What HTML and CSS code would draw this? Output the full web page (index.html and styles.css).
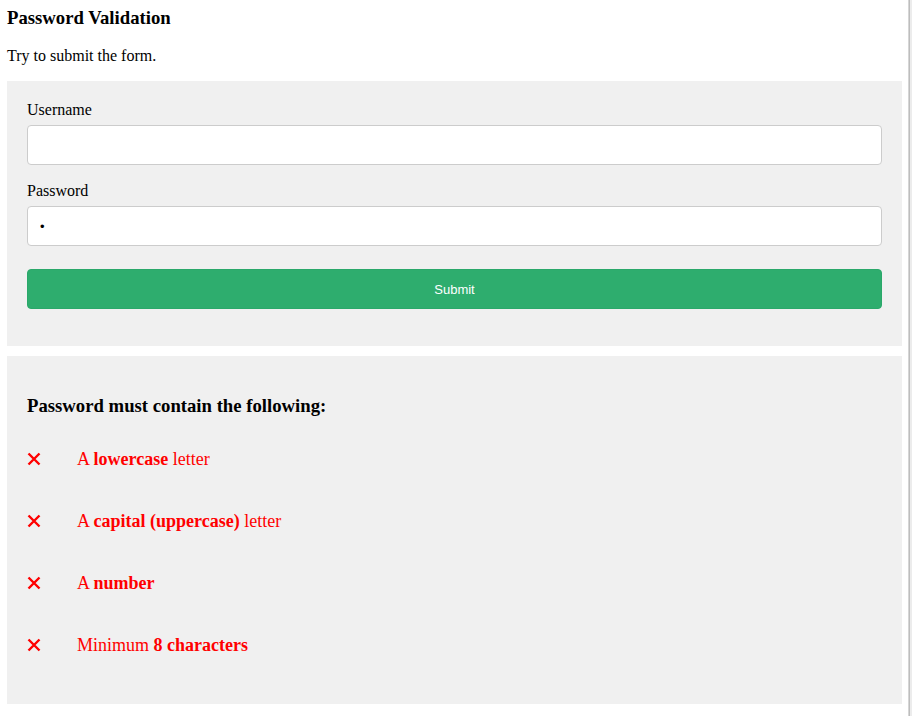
FILE: index.html
```html
<!DOCTYPE html>
<html>
<head>
<meta charset="utf-8">
<link rel="stylesheet" href="styles.css">
</head>
<body>
<h3 class="title">Password Validation</h3>
<p class="intro">Try to submit the form.</p>
<div class="container">
  <form class="form">
    <label class="label" for="usrname">Username</label>
    <input class="field" type="text" id="usrname" name="usrname">
    <label class="label" for="psw">Password</label>
    <input class="field" type="password" id="psw" name="psw" value="a">
    <input class="submit" type="submit" value="Submit">
  </form>
</div>
<div class="message">
  <h3 class="msg-title">Password must contain the following:</h3>
  <ul class="rules">
    <li class="rule"><svg class="cross" width="14" height="14" viewBox="0 0 14 14"><path d="M1.5 1.5 L12.5 12.5 M12.5 1.5 L1.5 12.5" stroke="#ff0000" stroke-width="2.4" fill="none"/></svg><span>A <b>lowercase</b> letter</span></li>
    <li class="rule"><svg class="cross" width="14" height="14" viewBox="0 0 14 14"><path d="M1.5 1.5 L12.5 12.5 M12.5 1.5 L1.5 12.5" stroke="#ff0000" stroke-width="2.4" fill="none"/></svg><span>A <b>capital (uppercase)</b> letter</span></li>
    <li class="rule"><svg class="cross" width="14" height="14" viewBox="0 0 14 14"><path d="M1.5 1.5 L12.5 12.5 M12.5 1.5 L1.5 12.5" stroke="#ff0000" stroke-width="2.4" fill="none"/></svg><span>A <b>number</b></span></li>
    <li class="rule"><svg class="cross" width="14" height="14" viewBox="0 0 14 14"><path d="M1.5 1.5 L12.5 12.5 M12.5 1.5 L1.5 12.5" stroke="#ff0000" stroke-width="2.4" fill="none"/></svg><span>Minimum <b>8 characters</b></span></li>
  </ul>
</div>
<div class="edge"></div>
</body>
</html>
```
FILE: styles.css
```css
html, body {
  background: #ffffff;
}
body {
  margin: 0 10px 0 7px;
  font-family: "Liberation Serif", "Times New Roman", serif;
  color: #000;
}
.title {
  margin: 7px 0 0;
  font-size: 18.72px;
  line-height: 22px;
  font-weight: bold;
}
.intro {
  margin: 17px 0 15px;
  font-size: 16px;
  line-height: 20px;
}
.container {
  background: #f0f0f0;
  padding: 20px;
}
.form {
  display: flex;
  flex-direction: column;
  margin: 0;
}
.label {
  font-size: 16px;
  line-height: 18px;
  margin-bottom: 6px;
}
.field {
  box-sizing: border-box;
  height: 40px;
  width: 100%;
  padding: 12px;
  border: 1px solid #cccccc;
  border-radius: 4px;
  background: #fff;
  margin: 0 0 17px;
  font-size: 13px;
}
.submit {
  box-sizing: border-box;
  height: 40px;
  width: 100%;
  margin: 6px 0 17px;
  border: 1px solid #2aa86a;
  border-radius: 4px;
  background: #2ead6e;
  color: #fff;
  font-family: "Liberation Sans", Arial, sans-serif;
  font-size: 13px;
}
.message {
  background: #f0f0f0;
  margin-top: 10px;
  padding: 20px;
  height: 308px;
}
.msg-title {
  margin: 19px 0 0;
  font-size: 18.72px;
  line-height: 22px;
}
.rules {
  list-style: none;
  margin: 31px 0 0;
  padding: 0;
  display: flex;
  flex-direction: column;
  gap: 40px;
}
.rule {
  display: flex;
  align-items: center;
  height: 22px;
  font-size: 18px;
  color: #ff0000;
}
.cross {
  flex: none;
  display: block;
  margin: 0 36px 0 0;
}
.edge {
  position: fixed;
  top: 0;
  right: 0;
  width: 4px;
  height: 100%;
  background: linear-gradient(to right, #d6d6d6 0, #d6d6d6 1px, #bdbdbd 1px, #bdbdbd 2px, #ececec 2px);
}
```
